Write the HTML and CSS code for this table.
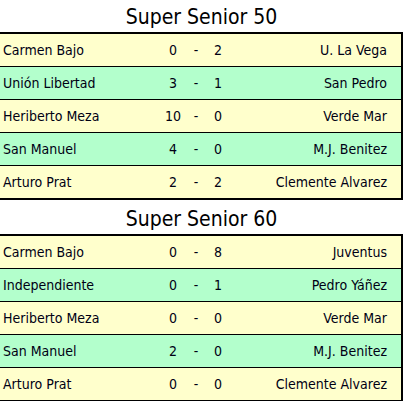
FILE: index.html
```html
<!DOCTYPE html>
<html>
<head>
<meta charset="utf-8">
<link rel="stylesheet" href="styles.css">
</head>
<body>
<section class="block">
  <h2 class="title">Super Senior 50</h2>
  <div class="table">
    <div class="row yellow"><span class="home">Carmen Bajo</span><span class="sc">0</span><span class="dash">-</span><span class="sc">2</span><span class="away">U. La Vega</span></div>
    <div class="row green"><span class="home">Unión Libertad</span><span class="sc">3</span><span class="dash">-</span><span class="sc">1</span><span class="away">San Pedro</span></div>
    <div class="row yellow"><span class="home">Heriberto Meza</span><span class="sc">10</span><span class="dash">-</span><span class="sc">0</span><span class="away">Verde Mar</span></div>
    <div class="row green"><span class="home">San Manuel</span><span class="sc">4</span><span class="dash">-</span><span class="sc">0</span><span class="away">M.J. Benitez</span></div>
    <div class="row yellow"><span class="home">Arturo Prat</span><span class="sc">2</span><span class="dash">-</span><span class="sc">2</span><span class="away">Clemente Alvarez</span></div>
  </div>
</section>
<section class="block">
  <h2 class="title">Super Senior 60</h2>
  <div class="table">
    <div class="row yellow"><span class="home">Carmen Bajo</span><span class="sc">0</span><span class="dash">-</span><span class="sc">8</span><span class="away">Juventus</span></div>
    <div class="row green"><span class="home">Independiente</span><span class="sc">0</span><span class="dash">-</span><span class="sc">1</span><span class="away">Pedro Yáñez</span></div>
    <div class="row yellow"><span class="home">Heriberto Meza</span><span class="sc">0</span><span class="dash">-</span><span class="sc">0</span><span class="away">Verde Mar</span></div>
    <div class="row green"><span class="home">San Manuel</span><span class="sc">2</span><span class="dash">-</span><span class="sc">0</span><span class="away">M.J. Benitez</span></div>
    <div class="row yellow"><span class="home">Arturo Prat</span><span class="sc">0</span><span class="dash">-</span><span class="sc">0</span><span class="away">Clemente Alvarez</span></div>
  </div>
</section>
</body>
</html>
```

FILE: styles.css
```css
html, body {
  margin: 0;
  padding: 0;
  background: #ffffff;
}
body {
  font-family: "DejaVu Sans Condensed", "DejaVu Sans", sans-serif;
  font-stretch: condensed;
  color: #000014;
  width: 403px;
}
.block {
  margin-bottom: 2px;
}
.title {
  margin: 0;
  height: 32px;
  line-height: 34px;
  font-size: 21px;
  font-weight: normal;
  text-align: center;
  color: #000;
}
.table {
  border-top: 2px solid #000;
  border-bottom: 2px solid #000;
  border-right: 2px solid #000;
  width: 401px;
}
.row {
  display: grid;
  grid-template-columns: 160px 26px 20px 24px 1fr;
  height: 32px;
  align-items: center;
  font-size: 14px;
  border-bottom: 1px solid #000;
}
.row:last-child {
  border-bottom: none;
}
.yellow { background: #ffffcc; }
.green { background: #b3ffcc; }
.home { padding-left: 3px; }
.sc, .dash { text-align: center; }
.away { text-align: right; padding-right: 14px; }
```
